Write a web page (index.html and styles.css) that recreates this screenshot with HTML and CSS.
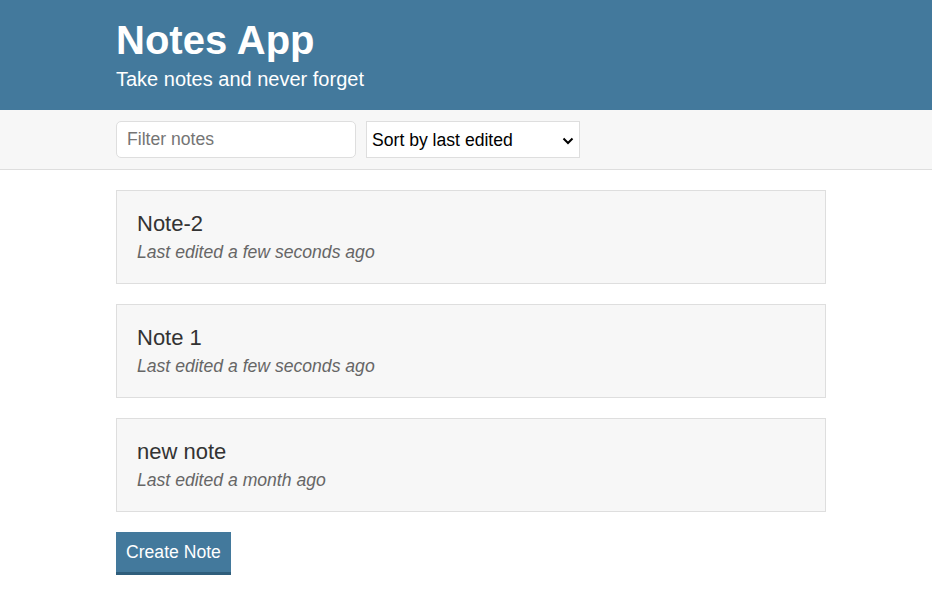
FILE: index.html
```html
<!DOCTYPE html>
<html lang="en">
<head>
<meta charset="utf-8">
<title>Notes App</title>
<link rel="stylesheet" href="styles.css">
</head>
<body>
<header class="header">
  <div class="container">
    <h1 class="header__title">Notes App</h1>
    <p class="header__subtitle">Take notes and never forget</p>
  </div>
</header>
<div class="actions">
  <div class="container actions__row">
    <input class="input" type="text" placeholder="Filter notes">
    <div class="select-wrap">
      <select class="select">
        <option>Sort by last edited</option>
        <option>Sort by recently created</option>
        <option>Sort alphabetically</option>
      </select>
      <svg class="select-wrap__chevron" width="12" height="8" viewBox="0 0 12 8"><path d="M1.5 1.5 L6 6 L10.5 1.5" fill="none" stroke="#000" stroke-width="2"/></svg>
    </div>
  </div>
</div>
<main class="container main">
  <a class="note" href="#">
    <h2 class="note__title">Note-2</h2>
    <p class="note__meta">Last edited a few seconds ago</p>
  </a>
  <a class="note" href="#">
    <h2 class="note__title">Note 1</h2>
    <p class="note__meta">Last edited a few seconds ago</p>
  </a>
  <a class="note" href="#">
    <h2 class="note__title">new note</h2>
    <p class="note__meta">Last edited a month ago</p>
  </a>
  <div class="main__actions">
    <button class="button">Create Note</button>
  </div>
</main>
</body>
</html>
```
FILE: styles.css
```css
* { box-sizing: border-box; }
html, body { margin: 0; padding: 0; }
body {
  font-family: "Liberation Sans", Arial, Helvetica, sans-serif;
  font-size: 17.6px;
  color: #333;
  background: #fff;
}
.container {
  width: 710px;
  margin-left: 116px;
}
.header {
  background: #43799c;
  color: #fff;
  padding: 16px 0 19px;
}
.header__title {
  margin: 0 0 3px;
  font-size: 40px;
  font-weight: bold;
  line-height: 48px;
}
.header__subtitle {
  margin: 0;
  font-size: 20px;
  line-height: 24px;
}
.actions {
  background: #f7f7f7;
  border-bottom: 1px solid #dedede;
  padding: 11px 0;
}
.actions__row {
  display: flex;
  gap: 10px;
}
.input {
  width: 240px;
  height: 37px;
  border: 1px solid #dedede;
  border-radius: 5px;
  padding: 0 10px;
  font: inherit;
  color: #333;
  background: #fff;
  outline: none;
}
.input::placeholder { color: #757575; }
.select-wrap {
  position: relative;
  width: 214px;
  height: 37px;
}
.select {
  -webkit-appearance: none;
  appearance: none;
  width: 100%;
  height: 100%;
  border: 1px solid #dedede;
  border-radius: 0;
  padding: 0 24px 0 5px;
  font: inherit;
  color: #000;
  background: #fff;
  outline: none;
}
.select-wrap__chevron {
  position: absolute;
  right: 6px;
  top: 16px;
  pointer-events: none;
}
.main {
  padding-top: 20px;
  display: flex;
  flex-direction: column;
  gap: 20px;
}
.note {
  display: block;
  background: #f7f7f7;
  border: 1px solid #dedede;
  padding: 20px 20px 21px;
  text-decoration: none;
  color: #333;
}
.note__title {
  margin: 0 0 5px;
  font-size: 22px;
  font-weight: normal;
  line-height: 26px;
}
.note__meta {
  margin: 0;
  font-style: italic;
  color: #666;
  line-height: 20px;
}
.main__actions {
  display: flex;
}
.button {
  font: inherit;
  color: #fff;
  background: #43799c;
  border: none;
  border-bottom: 3px solid #2f5e7c;
  padding: 10px 10px;
  line-height: 20px;
  cursor: pointer;
}
```
